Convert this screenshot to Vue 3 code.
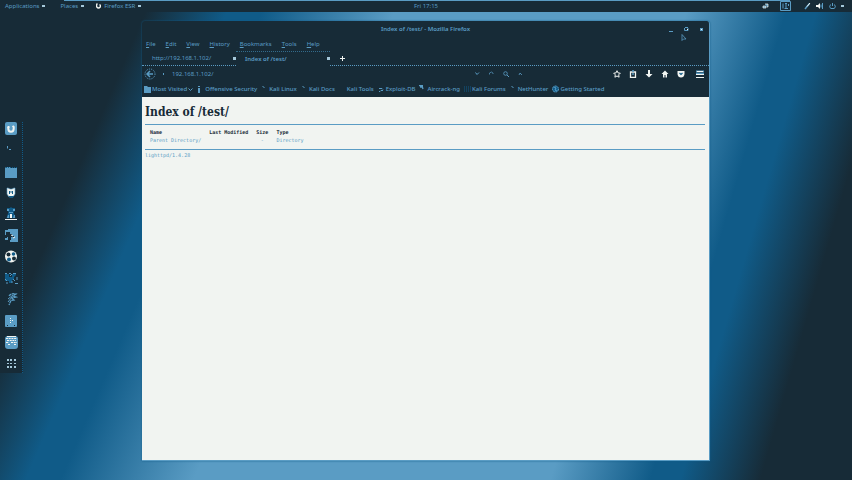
<script setup>
import { ref } from 'vue'

const address = ref('192.168.1.102/')
const menus = ['File', 'Edit', 'View', 'History', 'Bookmarks', 'Tools', 'Help']
const bookmarks = [
  { label: 'Most Visited', icon: 'folder', more: true },
  { label: 'Offensive Security', icon: 'bar' },
  { label: 'Kali Linux', icon: 'tick' },
  { label: 'Kali Docs', icon: 'tick' },
  { label: 'Kali Tools', icon: 'none' },
  { label: 'Exploit-DB', icon: 'bug' },
  { label: 'Aircrack-ng', icon: 'wing' },
  { label: 'Kali Forums', icon: 'dim' },
  { label: 'NetHunter', icon: 'tick' },
  { label: 'Getting Started', icon: 'globe' },
]
const dock = ['Firefox', 'Terminal', 'Files', 'Metasploit', 'Armitage', 'Burp Suite', 'Maltego', 'BeEF', 'Faraday', 'Leafpad', 'Tweak Tool', 'Show Applications']
</script>

<template>
  <div class="desktop">
    <svg class="wallpaper" viewBox="0 0 852 480" preserveAspectRatio="none" aria-hidden="true">
      <defs>
        <linearGradient id="left" gradientUnits="userSpaceOnUse" x1="0" y1="0" x2="363" y2="156">
          <stop offset=".35" stop-color="#172b37" />
          <stop offset=".54" stop-color="#105b88" />
          <stop offset=".62" stop-color="#105b88" />
          <stop offset=".93" stop-color="#5a9cc4" />
        </linearGradient>
        <linearGradient id="right" gradientUnits="userSpaceOnUse" x1="0" y1="0" x2="922" y2="267">
          <stop offset=".69" stop-color="#5a9cc4" />
          <stop offset=".79" stop-color="#105b88" />
          <stop offset=".82" stop-color="#105b88" />
          <stop offset=".9" stop-color="#172b37" />
        </linearGradient>
      </defs>
      <rect width="430" height="480" fill="url(#left)" />
      <rect x="430" width="422" height="480" fill="url(#right)" />
    </svg>

    <header class="panel">
      <nav class="panel-left">
        <button>Applications<i class="caret"></i></button>
        <button>Places<i class="caret"></i></button>
        <button>
          <svg width="5" height="6" viewBox="0 0 5 6"><path d="M1.4 .5Q0 2 .8 4Q2.5 6 4.2 4Q5 2.500 3.500 1.500" fill="none" stroke="#f1f4f1" stroke-width="1.400" /></svg>
          <span>Firefox ESR</span><i class="caret"></i>
        </button>
      </nav>
      <time class="clock">Fri 17:15</time>
      <div class="tray">
        <svg width="7" height="6" viewBox="0 0 7 6"><path d="M1 3h3v2H1zM3 1h3v3H5" fill="#5a9cc4" stroke="#f1f4f1" stroke-width=".7" /></svg>
        <svg class="workspace" width="11" height="10" viewBox="0 0 11 10"><path d="M.5 .5h10v9H.5z" fill="#172b37" stroke="#5a9cc4" /><path d="M3 2.500v5M5 2.500h2M6 3v4M4.500 7.500h3.500M8.500 3v2" fill="none" stroke="#5a9cc4" /></svg>
        <svg width="7" height="8" viewBox="0 0 7 8"><path d="M1 7L5.500 1.500" stroke="#5a9cc4" stroke-width="1.500" /><path d="M3 4.500L6 1" stroke="#f1f4f1" /></svg>
        <svg width="8" height="8" viewBox="0 0 8 8"><path d="M0 3h2l2-2v6L2 5H0z" fill="#f1f4f1" /><path d="M5 2.500v3M6.500 1v6" stroke="#5a9cc4" fill="none" /></svg>
        <svg width="7" height="8" viewBox="0 0 7 8"><path d="M3.500 1v3M1.500 2.500Q-.3 5 1.700 6.500h3.600Q7.300 5 5.500 2.500" fill="none" stroke="#5a9cc4" /></svg>
        <i class="caret"></i>
      </div>
    </header>

    <div class="workarea">
      <aside class="dock">
        <button v-for="(app, i) in dock" :key="app" :aria-label="app">
          <svg width="13" height="13" viewBox="0 0 13 13">
            <g v-if="i === 0"><rect width="12" height="13" rx="2" fill="#5a9cc4" /><path d="M3.300 5v1.500Q3.300 9.700 6 9.700T8.700 6.500V5L7.500 4" fill="none" stroke="#f1f4f1" stroke-width="2" /><path d="M2.500 4h2v2h-2z" fill="#f1f4f1" /></g>
            <path v-else-if="i === 1" d="M2.500 3v2.500M4 6.500h2" stroke="#5a9cc4" fill="none" />
            <g v-else-if="i === 2"><path d="M1 2h4l1 1h6v10H0V3z" fill="#5a9cc4" /><path d="M1 2.500h11" stroke="#105b88" stroke-dasharray="1 1" /></g>
            <g v-else-if="i === 3"><path d="M2 2h1l2 1h2l2-1h1v6L8 11H4L2 8z" fill="#f1f4f1" stroke="#5a9cc4" stroke-width=".6" /><path d="M4.500 8V5L6 6.500 7.500 5v3" fill="none" stroke="#105b88" /><path d="M3 10h6v1l-3 1z" fill="#105b88" /></g>
            <g v-else-if="i === 4"><path d="M2 1h3l1-1 1 1h3v3L8.500 5l2 6h-9l2-6L2 3z" fill="#105b88" /><path d="M2 2h2v2H2zM8 2h2v2H8zM4 5h4v1H4zM3 8h1v3H2zM9 8h1v3H8z" fill="#5a9cc4" /><path d="M5 7h2v4H5zM0 12h12v1H0z" fill="#f1f4f1" /></g>
            <g v-else-if="i === 5"><path d="M3 0h10v13H5V11H0V9h2V6H0V1h3z" fill="#5a9cc4" /><path d="M1 3h4v2h2v2h2v1H6v3H3V8H1z" fill="#172b37" /><path d="M6 6l2 1M8 9l2-1" stroke="#f1f4f1" /></g>
            <g v-else-if="i === 6"><circle cx="6" cy="6.500" r="6" fill="#f1f4f1" /><circle cx="3.500" cy="4.500" r="2" fill="#172b37" /><circle cx="8.500" cy="4" r="1.800" fill="#105b88" /><circle cx="9" cy="8.500" r="2" fill="#172b37" /><circle cx="4" cy="9.500" r="2" fill="#105b88" /><circle cx="6" cy="6.500" r="1" fill="#f1f4f1" /></g>
            <g v-else-if="i === 7"><path d="M0 2h4v3h3V2h4v1L9 5v3H7v3H4V9H0z" fill="#105b88" /><path d="M0 1.500h2M4 1.500h2M8 1.500h3M5 4l2-2M8 7l2 2M10 11.500h3M1 11h2M12 5v3M0 7l2 2M6 10h2" stroke="#5a9cc4" fill="none" /></g>
            <g v-else-if="i === 8"><path d="M4 3q2-3 7-2L8 3l3 1-4 1 2 2-3 .5L4 12" fill="none" stroke="#5a9cc4" stroke-width="1.300" stroke-dasharray="3 .5" /><path d="M3 6l5-4M3 9l4-5" stroke="#5a9cc4" /></g>
            <g v-else-if="i === 9"><rect y="1" width="12" height="12" rx="1" fill="#5a9cc4" /><path d="M5 4h1v1H5zM5 6h1v1H5zM7 6h1v1H7zM5 8h1v1H5z" fill="#f1f4f1" /><path d="M2 11h1v1H2zM9 11h1v1H9z" fill="#172b37" /></g>
            <g v-else-if="i === 10"><rect width="13" height="13" rx="3" fill="#5a9cc4" /><path d="M2 .5h9" stroke="#f1f4f1" /><path d="M1 2.500h11M2 4.500h9M1 6.500h3M6 6.500h6M3 8.500h2M9 8.500h2" stroke="#f1f4f1" stroke-dasharray="2 .7" fill="none" /></g>
            <g v-else><path d="M2 2h2v2H2zM5 2h2v2H5zM9 2h2v2H9zM2 6h2v1H2zM5 6h2v1H5zM9 6h2v1H9zM2 9h2v2H2zM5 9h2v2H5zM9 9h2v2H9z" fill="#a5c8da" /></g>
          </svg>
        </button>
      </aside>

      <main class="window">
        <div class="titlebar">
          <span class="title">Index of /test/ - Mozilla Firefox</span>
          <div class="controls">
            <button aria-label="Minimize"><svg width="5" height="5"><path d="M0 4.500h4" stroke="#5a9cc4" /></svg></button>
            <button aria-label="Restore"><svg width="5" height="5"><path d="M1 .5h3M.5 1v2.500h3.500V1" fill="none" stroke="#5a9cc4" /><path d="M3 2h1v1H3z" fill="#f1f4f1" /></svg></button>
            <button aria-label="Close"><svg width="5" height="5"><path d="M1 1h3v3H1z" fill="#5a9cc4" /><path d="M2 2h1v1H2z" fill="#f1f4f1" /></svg></button>
          </div>
          <svg class="pointer" width="6" height="8" viewBox="0 0 6 8"><path d="M1 .5v6l1.500-1.500h2.500z" fill="#172b37" stroke="#5a9cc4" stroke-width=".8" /></svg>
        </div>

        <nav class="menubar">
          <button v-for="m in menus" :key="m"><u>{{ m[0] }}</u>{{ m.slice(1) }}</button>
        </nav>

        <div class="tabs">
          <div class="tab"><button class="tab-name">http://192.168.1.102/</button><button class="x" aria-label="Close tab"></button></div>
          <div class="tab active"><button class="tab-name">Index of /test/</button><button class="x" aria-label="Close tab"></button></div>
          <button class="new-tab" aria-label="New tab"><svg width="7" height="7"><path d="M3.500 1v5M1 3.500h5" stroke="#f1f4f1" /></svg></button>
        </div>

        <div class="toolbar">
          <button aria-label="Back"><svg width="12" height="12" viewBox="0 0 12 12"><circle cx="6" cy="6" r="5" fill="none" stroke="#5a9cc4" stroke-dasharray="1 1" /><path d="M3 6h6M6 3L3 6l3 3" fill="none" stroke="#5a9cc4" stroke-width="1.500" /></svg></button>
          <i class="dot"></i>
          <input v-model="address" class="address" aria-label="Address">
          <div class="field-icons">
            <svg width="5" height="5"><path d="M.5 1.500l1.500 2 2-2" fill="none" stroke="#5a9cc4" /></svg>
            <svg width="5" height="5"><path d="M.5 3.500V2Q2.500 0 4 2v1" fill="none" stroke="#5a9cc4" stroke-width=".7" /></svg>
            <svg width="6" height="6"><circle cx="2.500" cy="2.500" r="1.800" fill="none" stroke="#5a9cc4" stroke-width=".8" /><path d="M4 4l2 2" stroke="#5a9cc4" /></svg>
            <svg width="5" height="5"><path d="M1 4l1-2 2 2" fill="none" stroke="#5a9cc4" stroke-width=".8" /></svg>
          </div>
          <div class="actions">
            <button aria-label="Bookmark this page"><svg width="8" height="8" viewBox="0 0 8 8"><path d="M4 .7l1 2.200 2.300.3-1.600 1.600.4 2.400L4 6 1.900 7.200l.4-2.400L.7 3.200 3 2.900z" fill="none" stroke="#f1f4f1" /></svg></button>
            <button aria-label="Show bookmarks"><svg width="8" height="8" viewBox="0 0 8 8"><path d="M1.500 2h5v5.300h-5z" fill="#172b37" stroke="#f1f4f1" stroke-width="1.300" /><path d="M3 1h2M3 4h2" stroke="#5a9cc4" stroke-width="1.500" /></svg></button>
            <button aria-label="Downloads"><svg width="8" height="8" viewBox="0 0 8 8"><path d="M3 0h2v4h2.500L4 7.500.5 4H3z" fill="#f1f4f1" /></svg></button>
            <button aria-label="Home"><svg width="8" height="8" viewBox="0 0 8 8"><path d="M4 .5L.5 4H2v3.500h1.500V5h1v2.500H6V4h1.500z" fill="#f1f4f1" /></svg></button>
            <button aria-label="Pocket"><svg width="8" height="8" viewBox="0 0 8 8"><path d="M.5 1h7v3Q7 7.500 4 7.500T.5 4z" fill="#f1f4f1" /><path d="M2.500 3L4 4.500 5.500 3" fill="none" stroke="#105b88" stroke-width="1.200" /></svg></button>
            <button class="main-menu" aria-label="Menu"><svg width="8" height="8"><path d="M0 1.500h8M0 4h8" stroke="#5a9cc4" stroke-width="2" /><path d="M1 1.500h6M0 4.500h8M0 7.500h8" stroke="#f1f4f1" /></svg></button>
          </div>
        </div>

        <nav class="bookmarks">
          <a v-for="b in bookmarks" :key="b.label" href="#">
            <svg width="7" height="8" viewBox="0 0 7 8">
              <path v-if="b.icon === 'folder'" d="M0 1h3l1 1h3v6H0z" fill="#5a9cc4" />
              <path v-else-if="b.icon === 'bar'" d="M1 1h2v1H1zM1 3h2v5H1z" fill="#5a9cc4" />
              <path v-else-if="b.icon === 'tick'" d="M1.500 1.500l2 1" stroke="#5a9cc4" />
              <path v-else-if="b.icon === 'bug'" d="M1 3.500h3l1 1M1 6.500h1l1-1h2" fill="none" stroke="#5a9cc4" />
              <path v-else-if="b.icon === 'wing'" d="M0 .5h4M1 2h3M3 1l1 3" fill="none" stroke="#5a9cc4" stroke-width="1.300" />
              <path v-else-if="b.icon === 'dim'" d="M0 2h7M0 4h7M0 6h7" stroke="#105b88" stroke-dasharray="1 1" />
              <g v-else-if="b.icon === 'globe'"><circle cx="3.500" cy="4" r="3" fill="#105b88" stroke="#5a9cc4" stroke-dasharray="2 .6" /><path d="M2 2l2 1-1 2 2 1" fill="none" stroke="#5a9cc4" /></g>
            </svg>
            <span>{{ b.label }}</span>
            <svg v-if="b.more" width="5" height="5"><path d="M.5 1.500l2 2 2-2" fill="none" stroke="#5a9cc4" /></svg>
          </a>
        </nav>

        <article class="page">
          <h1>Index of /test/</h1>
          <div class="list">
            <table>
              <thead><tr><th>Name</th><th>Last Modified</th><th>Size</th><th>Type</th></tr></thead>
              <tbody><tr><td><a href="#">Parent Directory/</a></td><td></td><td class="size">-</td><td>Directory</td></tr></tbody>
            </table>
          </div>
          <footer>lighttpd/1.4.28</footer>
        </article>
      </main>
    </div>
  </div>
</template>

<style>
body { margin: 0; background: #172b37; }
</style>

<style scoped>
.desktop {
  position: relative;
  display: flex;
  flex-direction: column;
  min-height: 100vh;
  overflow: hidden;
  font: 6px/8px "Noto Sans", sans-serif;
  color: #5a9cc4;
}
.wallpaper { position: absolute; inset: 0; width: 100%; height: 100%; }
button {
  display: flex;
  align-items: center;
  padding: 0;
  border: 0;
  background: none;
  color: inherit;
  font: inherit;
}
a { color: inherit; text-decoration: none; }
svg { flex: none; display: block; }
.caret { width: 3px; height: 2px; margin-left: 3px; background: #a5c8da; }

.panel {
  position: relative;
  display: grid;
  grid-template-columns: 1fr auto 1fr;
  align-items: center;
  height: 12px;
  background: linear-gradient(#5a9cc4, #5a9cc4) 64px 0 / calc(100% - 126px) 1px no-repeat #172b37;
}
.panel-left { display: flex; gap: 15px; padding-left: 5px; }
.panel-left svg { margin: 0 3px 0 -3px; }
.tray { display: flex; align-items: center; justify-content: flex-end; gap: 5px; padding-right: 8px; }
.tray .caret { margin: 0; }
.workspace { margin: 0 8px 0 6px; }

.workarea { position: relative; flex: 1; display: flex; }
.dock {
  display: flex;
  flex-direction: column;
  justify-content: space-between;
  align-items: center;
  align-self: flex-start;
  width: 23px;
  height: 251px;
  box-sizing: border-box;
  margin-top: 110px;
  padding: 0 0 3px 1px;
  border-right: 1px dotted #105b88;
  background: #172b37;
}
.window {
  flex: 1;
  min-width: 0;
  display: flex;
  flex-direction: column;
  margin: 9px 142px 19px 119px;
  border: solid #5a9cc4;
  border-width: 0 1px 1px 0;
  border-radius: 3px 3px 0 0;
  background: #172b37;
  box-shadow: 0 0 2px #105b88;
}
.titlebar { position: relative; display: flex; align-items: center; justify-content: center; height: 16px; }
.title { font-weight: 600; }
.controls { position: absolute; right: 5px; display: flex; gap: 10px; }
.pointer { position: absolute; right: 22px; top: 13px; }
.menubar { display: flex; align-items: center; gap: 10px; height: 14px; padding-left: 4px; }
.menubar u { text-underline-offset: 1px; }

.tabs { display: flex; height: 15px; }
.tab { display: flex; align-items: center; justify-content: space-between; width: 94px; padding: 0 0 0 10px; box-sizing: border-box; border-bottom: 1px dotted #5a9cc4; }
.tab.active { padding-left: 9px; border-bottom-color: transparent; border-top: 1px dotted #336b8c; font-weight: 600; }
.x { width: 3px; height: 3px; background: #a5c8da; }
.new-tab { flex: 1; padding-left: 9px; border-bottom: 1px dotted #5a9cc4; }

.toolbar { display: flex; align-items: center; height: 15px; padding: 0 5px 0 2px; }
.dot { width: 1px; height: 2px; margin: 0 8px 0 7px; background: #5a9cc4; }
.address { flex: 1; min-width: 0; padding: 0; border: 0; outline: 0; background: none; color: inherit; font: inherit; }
.field-icons { display: flex; align-items: center; gap: 9px; margin-right: 90px; }
.actions { display: flex; align-items: center; gap: 8px; }
.main-menu { margin-left: 3px; }

.bookmarks { display: flex; align-items: center; gap: 4px; height: 16px; padding-left: 2px; overflow: hidden; font-weight: 500; }
.bookmarks a { display: flex; align-items: center; gap: 1px; white-space: nowrap; }

.page { flex: 1; padding: 8px 4px 8px 3px; background: #f1f4f1; font: 5px/8px "DejaVu Sans Mono", monospace; }
h1 { margin: 0 0 4px; font: bold 12px/15px "DejaVu Serif Condensed", "DejaVu Serif", serif; color: #172b37; }
.list { padding: 3px 0 5px 5px; border: solid #5a9cc4; border-width: 1px 0; }
table { border-collapse: collapse; }
th, td { padding: 0 8px 0 0; text-align: left; }
th { color: #172b37; }
.size { text-align: center; }
footer { padding-top: 1px; }
</style>
